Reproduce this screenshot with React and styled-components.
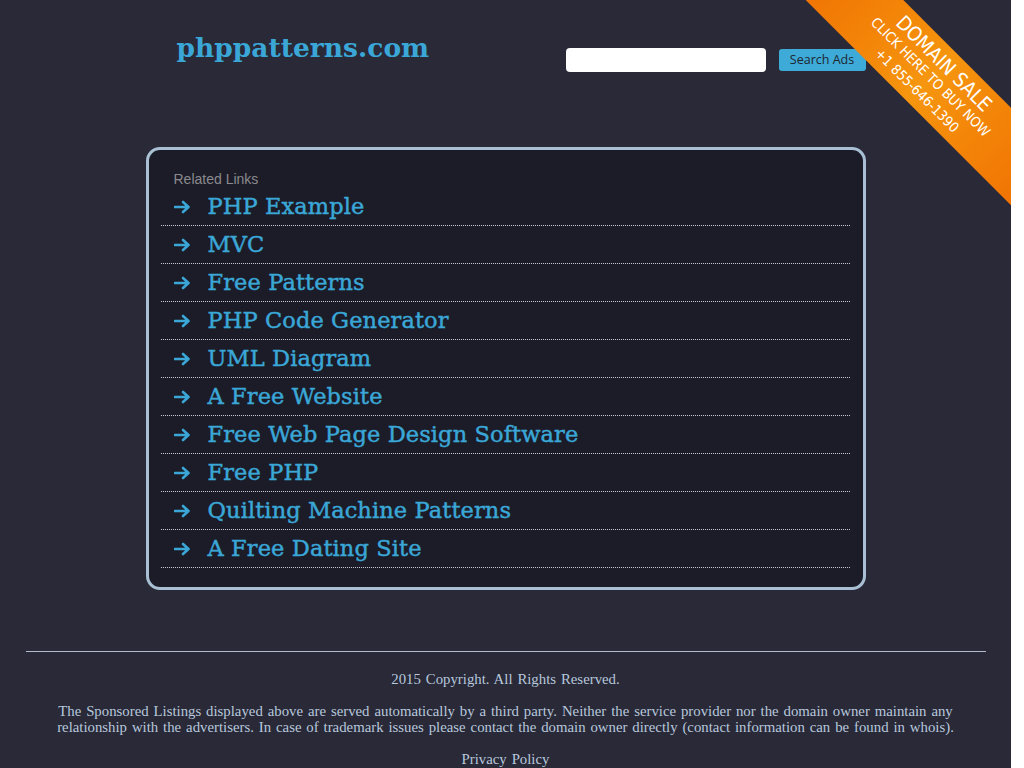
import React from "react";
import styled, { createGlobalStyle } from "styled-components";

const Global = createGlobalStyle`
  html { background: #ffffff; }
  body { margin: 0; background: #ffffff; }
  * { box-sizing: border-box; }
`;

const Page = styled.div`
  position: relative;
  width: 1011px;
  min-height: 768px;
  background: #292938;
  overflow: hidden;
  padding-bottom: 1px;
`;

const Container = styled.div`
  width: 720px;
  margin: 0 auto;
`;

const Header = styled.header`
  display: flex;
  justify-content: space-between;
  align-items: flex-start;
  padding-left: 31px;
  height: 147px;
`;

const Logo = styled.a`
  display: block;
  margin-top: 31px;
  font-family: "DejaVu Serif", serif;
  font-weight: bold;
  font-size: 26.5px;
  line-height: 34px;
  color: #3aa7d7;
  text-decoration: none;
`;

const SearchForm = styled.form`
  display: flex;
  align-items: center;
  gap: 13px;
  margin-top: 48px;
`;

const SearchInput = styled.input`
  width: 200px;
  height: 24px;
  border: none;
  border-radius: 4px;
  background: #ffffff;
  padding: 0 6px;
  outline: none;
`;

const SearchButton = styled.button`
  height: 22px;
  width: 87px;
  border: none;
  border-radius: 3px;
  background: #3eaad7;
  color: #1d2631;
  font-family: "Open Sans", sans-serif;
  font-size: 12.5px;
  line-height: 22px;
  padding: 0;
`;

const Box = styled.section`
  border: 3px solid #a9c0d4;
  border-radius: 14px;
  background: #1c1c28;
  padding: 0 13px 19px 12px;
`;

const Label = styled.div`
  padding: 20px 0 0 13px;
  height: 38px;
  font-family: "Liberation Sans", Arial, sans-serif;
  font-size: 14px;
  line-height: 18px;
  color: #8a8a8e;
`;

const List = styled.ul`
  list-style: none;
  margin: 0;
  padding: 0;
`;

const Row = styled.li`
  display: flex;
  align-items: center;
  height: 38px;
  padding-left: 13px;
  border-bottom: 1px dotted #c8ccd4;
`;

const Arrow = styled.span`
  width: 34px;
  flex: none;
  display: flex;
  align-items: center;
  color: #3aa7d7;
`;

const LinkText = styled.a`
  font-family: "DejaVu Serif", serif;
  font-size: 22.5px;
  line-height: 30px;
  margin-top: -2px;
  color: #3aa7d7;
  text-decoration: none;
  letter-spacing: 0.1px;
  -webkit-text-stroke: 0.45px #3aa7d7;
`;

const Footer = styled.footer`
  width: 960px;
  margin: 61px auto 0;
  border-top: 1px solid #b3bccb;
  text-align: center;
  font-family: "Liberation Serif", "Times New Roman", serif;
  font-size: 14.8px;
  word-spacing: 1.2px;
  line-height: 16px;
  color: #b7c8dc;
`;

const FooterP = styled.p`
  margin: ${(p) => p.$top}px 0 0;
`;

const RibbonWrap = styled.div`
  position: absolute;
  top: 0;
  right: 0;
  width: 230px;
  height: 230px;
  overflow: hidden;
`;

const Band = styled.a`
  position: absolute;
  left: -50.5px;
  top: 42px;
  width: 400px;
  height: 69px;
  transform: rotate(45deg);
  background: linear-gradient(to right, #ef6800 0%, #f48a0a 38%, #f6960f 50%, #f48a0a 62%, #ef6800 100%);
  display: flex;
  flex-direction: column;
  align-items: center;
  padding-top: 5px;
  color: #ffffff;
  text-decoration: none;
  font-family: "DejaVu Sans Condensed", "DejaVu Sans", sans-serif;
`;

const BandLine = styled.span`
  display: block;
  font-size: ${(p) => p.$size}px;
  line-height: ${(p) => p.$lh}px;
  margin-top: ${(p) => p.$mt || 0}px;
  white-space: nowrap;
`;

const links = [
  "PHP Example",
  "MVC",
  "Free Patterns",
  "PHP Code Generator",
  "UML Diagram",
  "A Free Website",
  "Free Web Page Design Software",
  "Free PHP",
  "Quilting Machine Patterns",
  "A Free Dating Site",
];

const ArrowIcon = () => (
  <svg width="17" height="14" viewBox="0 0 17 14">
    <path d="M1 7 H14 M9 2 L14.5 7 L9 12" fill="none" stroke="currentColor" strokeWidth="2.6" strokeLinecap="round" strokeLinejoin="round" />
  </svg>
);

export default function App() {
  return (
    <>
      <Global />
      <Page>
        <Container>
          <Header>
            <Logo href="#">phppatterns.com</Logo>
            <SearchForm onSubmit={(e) => e.preventDefault()}>
              <SearchInput type="text" />
              <SearchButton type="submit">Search Ads</SearchButton>
            </SearchForm>
          </Header>
          <Box>
            <Label>Related Links</Label>
            <List>
              {links.map((l) => (
                <Row key={l}>
                  <Arrow>
                    <ArrowIcon />
                  </Arrow>
                  <LinkText href="#">{l}</LinkText>
                </Row>
              ))}
            </List>
          </Box>
        </Container>
        <Footer>
          <FooterP $top={19}>2015 Copyright. All Rights Reserved.</FooterP>
          <FooterP $top={16}>
            The Sponsored Listings displayed above are served automatically by a third party. Neither the service provider nor the domain owner maintain any
            <br />
            relationship with the advertisers. In case of trademark issues please contact the domain owner directly (contact information can be found in whois).
          </FooterP>
          <FooterP $top={16}>Privacy Policy</FooterP>
        </Footer>
        <RibbonWrap>
          <Band href="#">
            <BandLine $size={20} $lh={23}>DOMAIN SALE</BandLine>
            <BandLine $size={14} $lh={15}>CLICK HERE TO BUY NOW</BandLine>
            <BandLine $size={14} $lh={15} $mt={4}>+1 855-646-1390</BandLine>
          </Band>
        </RibbonWrap>
      </Page>
    </>
  );
}
